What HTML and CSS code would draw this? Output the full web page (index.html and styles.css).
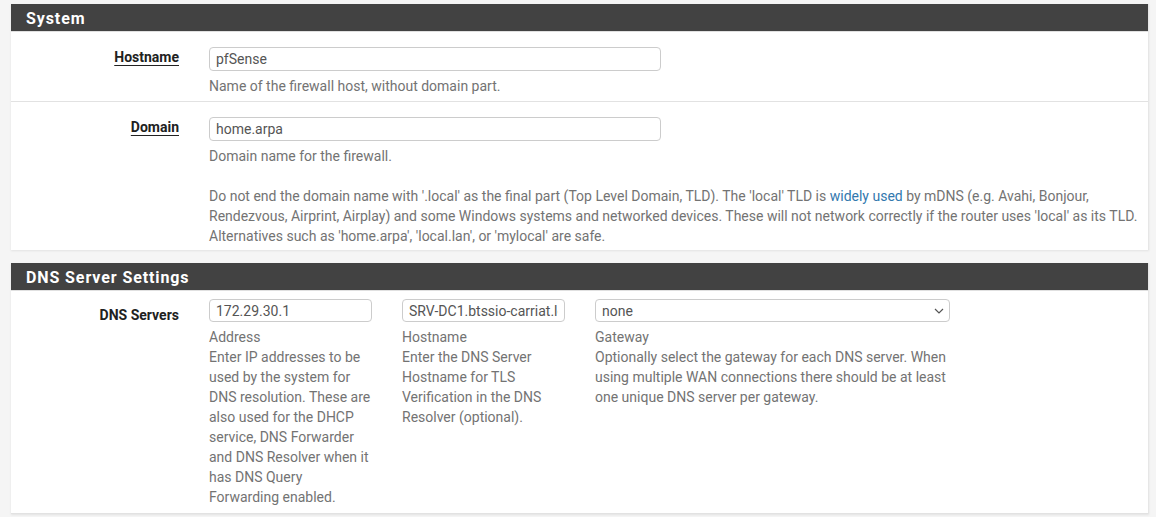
FILE: index.html
```html
<!DOCTYPE html>
<html lang="en">
<head>
<meta charset="utf-8">
<title>System / General Setup</title>
<link rel="stylesheet" href="styles.css">
</head>
<body>
<div class="page">
  <section class="panel">
    <h2 class="panel-title">System</h2>
    <div class="panel-body">
      <div class="form-group">
        <div class="label-col"><span class="label element-required">Hostname</span></div>
        <div class="field-col">
          <input class="form-control wide" type="text" value="pfSense">
          <div class="help-block">Name of the firewall host, without domain part.</div>
        </div>
      </div>
      <div class="form-group last">
        <div class="label-col"><span class="label element-required">Domain</span></div>
        <div class="field-col">
          <input class="form-control wide" type="text" value="home.arpa">
          <div class="help-block">Domain name for the firewall.<br><br>Do not end the domain name with '.local' as the final part (Top Level Domain, TLD). The 'local' TLD is <a href="#">widely used</a> by mDNS (e.g. Avahi, Bonjour, Rendezvous, Airprint, Airplay) and some Windows systems and networked devices. These will not network correctly if the router uses 'local' as its TLD. Alternatives such as 'home.arpa', 'local.lan', or 'mylocal' are safe.</div>
        </div>
      </div>
    </div>
  </section>

  <section class="panel">
    <h2 class="panel-title">DNS Server Settings</h2>
    <div class="panel-body">
      <div class="form-group repeat">
        <div class="label-col"><span class="label">DNS Servers</span></div>
        <div class="field-cell narrow">
          <input class="form-control" type="text" value="172.29.30.1">
          <div class="help-block">Address<br>Enter IP addresses to be used by the system for DNS resolution. These are also used for the DHCP service, DNS Forwarder and DNS Resolver when it has DNS Query Forwarding enabled.</div>
        </div>
        <div class="field-cell narrow">
          <input class="form-control" type="text" value="SRV-DC1.btssio-carriat.local">
          <div class="help-block">Hostname<br>Enter the DNS Server Hostname for TLS Verification in the DNS Resolver (optional).</div>
        </div>
        <div class="field-cell broad">
          <div class="form-control select">
            <span>none</span>
            <svg class="chevron" width="10" height="6" viewBox="0 0 10 6"><path d="M1 1l4 4 4-4" fill="none" stroke="#555" stroke-width="1.2"/></svg>
          </div>
          <div class="help-block">Gateway<br>Optionally select the gateway for each DNS server. When using multiple WAN connections there should be at least one unique DNS server per gateway.</div>
        </div>
      </div>
    </div>
  </section>
</div>
</body>
</html>
```

FILE: styles.css
```css
html, body {
  margin: 0;
  padding: 0;
  background: #f5f5f5;
  font-family: Roboto, "Liberation Sans", Arial, sans-serif;
  font-size: 14px;
  color: #212121;
}

.page {
  padding: 4px 7px 0 11px;
}

.panel {
  background: #fff;
  border-right: 1px solid #e6e6e6;
  box-shadow: 0 1px 2px rgba(0, 0, 0, 0.08);
  margin-bottom: 13px;
}

.panel-title {
  margin: 0;
  height: 28px;
  line-height: 30px;
  padding: 0 15px;
  background: #424242;
  color: #fff;
  font-size: 16px;
  font-weight: 700;
  letter-spacing: 0.9px;
  border-bottom: 1px solid #e0e0e0;
  box-sizing: border-box;
}

.form-group {
  display: flex;
  padding: 15px 0 5px;
  border-bottom: 1px solid #e2e2e2;
}

.form-group.last {
  border-bottom: none;
  padding-bottom: 4px;
}

.form-group.repeat {
  padding-top: 8px;
  padding-bottom: 6px;
}

.label-col {
  width: 183px;
  flex: none;
  padding-right: 15px;
  box-sizing: border-box;
  text-align: right;
  padding-top: 0;
}

.repeat .label-col {
  padding-top: 6px;
}

.label {
  font-weight: 700;
  color: #212121;
  line-height: 20px;
}

.element-required {
  text-decoration: underline;
  text-underline-offset: 3px;
  text-decoration-thickness: 1px;
}

.field-col {
  flex: 1;
  padding: 0 0 0 15px;
}

.field-cell {
  flex: none;
  padding: 0 15px;
}

.field-cell.narrow {
  width: 163px;
}

.field-cell.broad {
  width: 355px;
}

.form-control {
  display: block;
  box-sizing: border-box;
  width: 100%;
  height: 24px;
  margin: 0;
  padding: 0 6px;
  border: 1px solid #ccc;
  border-radius: 4px;
  font-family: inherit;
  font-size: 14px;
  color: #555;
  background: #fff;
  outline: none;
}

.repeat .form-control {
  height: 23px;
}

.form-control.wide {
  width: 452px;
}

.select {
  display: flex;
  align-items: center;
  justify-content: space-between;
  padding-right: 5px;
}

.chevron {
  display: block;
}

.help-block {
  margin-top: 5px;
  color: #737373;
  line-height: 20px;
}

.help-block a {
  color: #3278ae;
  text-decoration: none;
}
```
